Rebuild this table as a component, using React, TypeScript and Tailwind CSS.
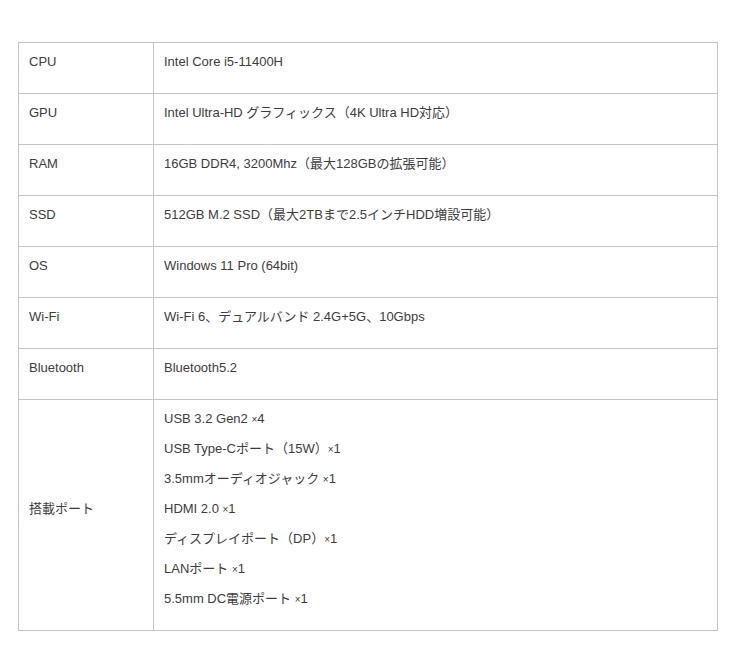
const specs: { label: string; values: string[] }[] = [
  { label: 'CPU', values: ['Intel Core i5-11400H'] },
  { label: 'GPU', values: ['Intel Ultra-HD グラフィックス（4K Ultra HD対応）'] },
  { label: 'RAM', values: ['16GB DDR4, 3200Mhz（最大128GBの拡張可能）'] },
  { label: 'SSD', values: ['512GB M.2 SSD（最大2TBまで2.5インチHDD増設可能）'] },
  { label: 'OS', values: ['Windows 11 Pro (64bit)'] },
  { label: 'Wi-Fi', values: ['Wi-Fi 6、デュアルバンド 2.4G+5G、10Gbps'] },
  { label: 'Bluetooth', values: ['Bluetooth5.2'] },
  {
    label: '搭載ポート',
    values: [
      'USB 3.2 Gen2 ×4',
      'USB Type-Cポート（15W）×1',
      '3.5mmオーディオジャック ×1',
      'HDMI 2.0 ×1',
      'ディスプレイポート（DP）×1',
      'LANポート ×1',
      '5.5mm DC電源ポート ×1',
    ],
  },
];

// small multiplication sign, as in the reference
function withTimes(text: string) {
  const i = text.lastIndexOf('×');
  if (i < 0) return text;
  return (
    <>
      {text.slice(0, i)}
      <span className="text-[10px] leading-none">×</span>
      {text.slice(i + 1)}
    </>
  );
}

export default function App() {
  return (
    <div className="min-h-[671px] bg-white pt-[42px] font-['Liberation_Sans','Noto_Sans_CJK_JP',sans-serif] text-[13px] leading-[18px] text-[#3c3c3c]">
      <div className="ml-[18px] w-[700px] border-l border-t border-[#c4c4c4]">
        {specs.map((row) => (
          <div key={row.label} className="flex border-b border-[#c4c4c4]">
            <div className="flex w-[135px] shrink-0 items-center border-r border-[#c4c4c4] pl-[10px] pr-[10px] pt-[10px] pb-[22px]">
              {row.label}
            </div>
            <div className="flex flex-1 flex-col gap-[12px] border-r border-[#c4c4c4] pl-[10px] pr-[10px] pt-[10px] pb-[22px]">
              {row.values.map((v) => (
                <div key={v} className="h-[18px] overflow-hidden">{withTimes(v)}</div>
              ))}
            </div>
          </div>
        ))}
      </div>
    </div>
  );
}
